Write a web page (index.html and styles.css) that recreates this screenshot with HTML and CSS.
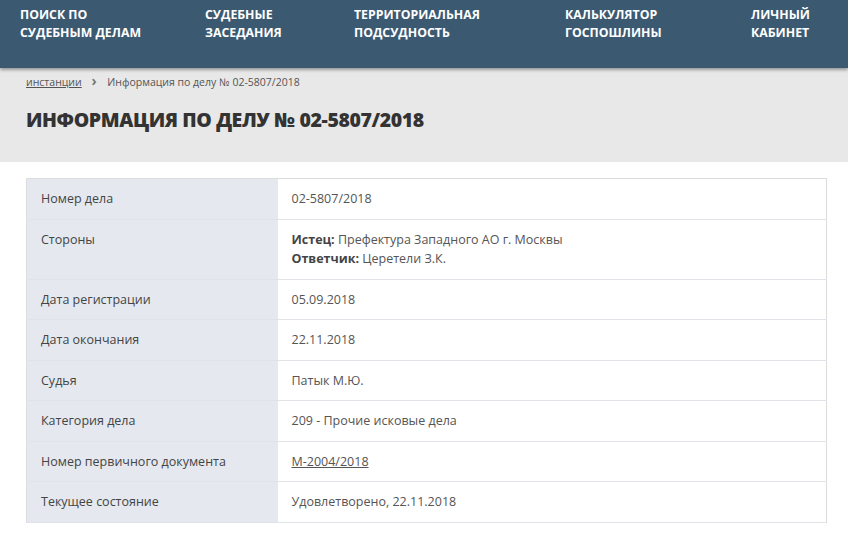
FILE: index.html
```html
<!DOCTYPE html>
<html lang="ru">
<head>
    <meta charset="UTF-8">
    <title>Информация по делу № 02-5807/2018</title>
    <link rel="stylesheet" href="styles.css">
</head>
<body>
    <header class="top-nav">
        <a class="nav-item" href="#">Поиск по<br>судебным делам</a>
        <a class="nav-item" href="#">Судебные<br>заседания</a>
        <a class="nav-item" href="#">Территориальная<br>подсудность</a>
        <a class="nav-item" href="#">Калькулятор<br>госпошлины</a>
        <a class="nav-item" href="#">Личный<br>кабинет</a>
    </header>
    <section class="page-head">
        <div class="breadcrumbs">
            <a href="#">инстанции</a>
            <span class="crumb-sep">&rsaquo;</span>
            <span>Информация по делу № 02-5807/2018</span>
        </div>
        <h1 class="page-title">Информация по делу № 02-5807/2018</h1>
    </section>
    <section class="case-info">
        <table class="case-table">
            <tr>
                <td>Номер дела</td>
                <td>02-5807/2018</td>
            </tr>
            <tr>
                <td>Стороны</td>
                <td><b>Истец:</b> Префектура Западного АО г. Москвы<br><b>Ответчик:</b> Церетели З.К.</td>
            </tr>
            <tr>
                <td>Дата регистрации</td>
                <td>05.09.2018</td>
            </tr>
            <tr>
                <td>Дата окончания</td>
                <td>22.11.2018</td>
            </tr>
            <tr>
                <td>Судья</td>
                <td>Патык М.Ю.</td>
            </tr>
            <tr>
                <td>Категория дела</td>
                <td>209 - Прочие исковые дела</td>
            </tr>
            <tr>
                <td>Номер первичного документа</td>
                <td><a href="#">М-2004/2018</a></td>
            </tr>
            <tr>
                <td>Текущее состояние</td>
                <td>Удовлетворено, 22.11.2018</td>
            </tr>
        </table>
    </section>
</body>
</html>
```

FILE: styles.css
```css
* {
    padding: 0;
    margin: 0;
    box-sizing: border-box;
}

body {
    font-family: "Open Sans", "Noto Sans", sans-serif;
    font-size: 12.5px;
    color: #444;
    background: #fff;
}

.top-nav {
    position: relative;
    z-index: 2;
    height: 68px;
    padding: 6px 0 0 20px;
    display: grid;
    grid-template-columns: 185px 149px 211px 186px auto;
    background: #3b5a72;
    box-shadow: 0 2px 3px rgba(0,0,0,.35);
}

.nav-item {
    color: #fff;
    font-size: 12.3px;
    font-weight: 700;
    line-height: 18px;
    text-transform: uppercase;
    text-decoration: none;
}

.page-head {
    height: 94px;
    padding: 4px 26px 0;
    background: #e8e8e8;
}

.breadcrumbs {
    font-size: 10.5px;
    line-height: 18px;
    color: #555;
}

.breadcrumbs a {
    color: #555;
}

.crumb-sep {
    display: inline-block;
    margin: 0 8px 0 7px;
    font-weight: 700;
    font-size: 14px;
    color: #777;
}

.page-title {
    margin-top: 17px;
    font-size: 19.5px;
    font-weight: 800;
    line-height: 24px;
    letter-spacing: -.4px;
    text-transform: uppercase;
    color: #333;
}

.case-info {
    padding: 16px 21px 0 26px;
}

.case-table {
    width: 100%;
    border-collapse: collapse;
    border: 1px solid #dcdcdc;
}

.case-table td {
    padding: 10px 14px;
    line-height: 19.5px;
    vertical-align: top;
    border-bottom: 1px solid #e0e3e7;
    color: #555;
}

.case-table td:first-child {
    width: 251px;
    background: #e5e9ef;
    color: #444;
}

.case-table td b {
    color: #444;
}

.case-table a {
    color: #555;
}
```
